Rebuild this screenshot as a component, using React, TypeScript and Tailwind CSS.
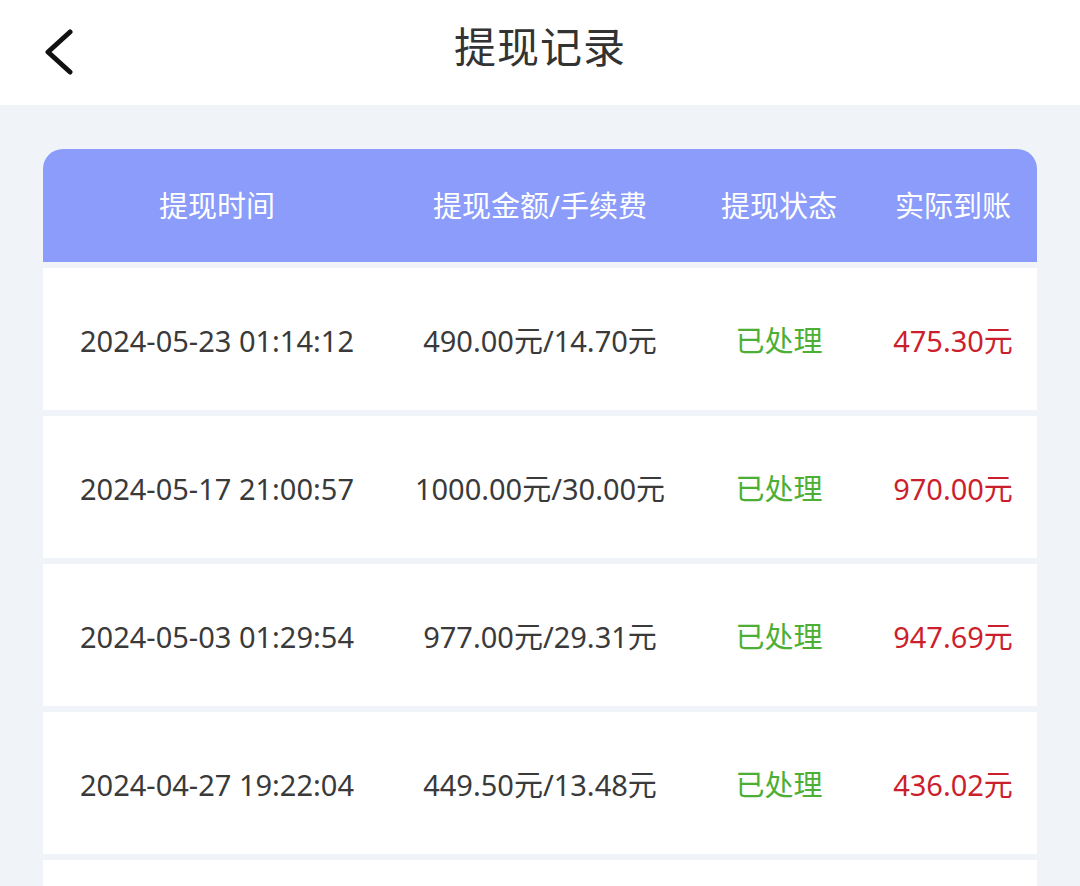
import React from "react";

const records = [
  { time: "2024-05-23 01:14:12", amount: "490.00元/14.70元", status: "已处理", real: "475.30元" },
  { time: "2024-05-17 21:00:57", amount: "1000.00元/30.00元", status: "已处理", real: "970.00元" },
  { time: "2024-05-03 01:29:54", amount: "977.00元/29.31元", status: "已处理", real: "947.69元" },
  { time: "2024-04-27 19:22:04", amount: "449.50元/13.48元", status: "已处理", real: "436.02元" },
  { time: "", amount: "", status: "", real: "" },
];

const cols = "grid grid-cols-[348px_298px_180px_168px]";

export default function App(): React.ReactElement {
  return (
    <div
      className="w-[1080px] h-[886px] overflow-hidden bg-[#f0f3f7]"
      style={{ fontFamily: '"Noto Sans", "Noto Sans CJK SC", sans-serif' }}
    >
      {/* top bar */}
      <div className="relative h-[105px] bg-white flex items-center justify-center">
        <button className="absolute left-[40px] top-[20px] w-[40px] h-[55px] flex items-center justify-center">
          <svg width="40" height="55" viewBox="0 0 40 55" fill="none">
            <path
              d="M30 12 L8 32 L30 52"
              stroke="#111"
              strokeWidth="5"
              strokeLinecap="round"
              strokeLinejoin="round"
            />
          </svg>
        </button>
        <h1 className="text-[42px] leading-none text-[#333] tracking-[1px] -mt-[12px]">提现记录</h1>
      </div>

      <div className="px-[43px] pt-[44px]">
        {/* table head */}
        <div className={`${cols} h-[113px] bg-[#8b9cfa] rounded-t-[20px] items-center text-white text-[29px]`}>
          <div className="text-center">提现时间</div>
          <div className="text-center">提现金额/手续费</div>
          <div className="text-center">提现状态</div>
          <div className="text-center">实际到账</div>
        </div>

        <div className="flex flex-col gap-[6px] pt-[6px]">
          {records.map((r, i) => (
            <div key={i} className={`${cols} h-[142px] bg-white items-center text-[29px] pt-[3px]`}>
              <div className="text-center text-[#3a3a3a]">{r.time}</div>
              <div className="text-center text-[#3a3a3a]">{r.amount}</div>
              <div className="text-center text-[#4caf35]">{r.status}</div>
              <div className="text-center text-[#cc1f2d]">{r.real}</div>
            </div>
          ))}
        </div>
      </div>
    </div>
  );
}
